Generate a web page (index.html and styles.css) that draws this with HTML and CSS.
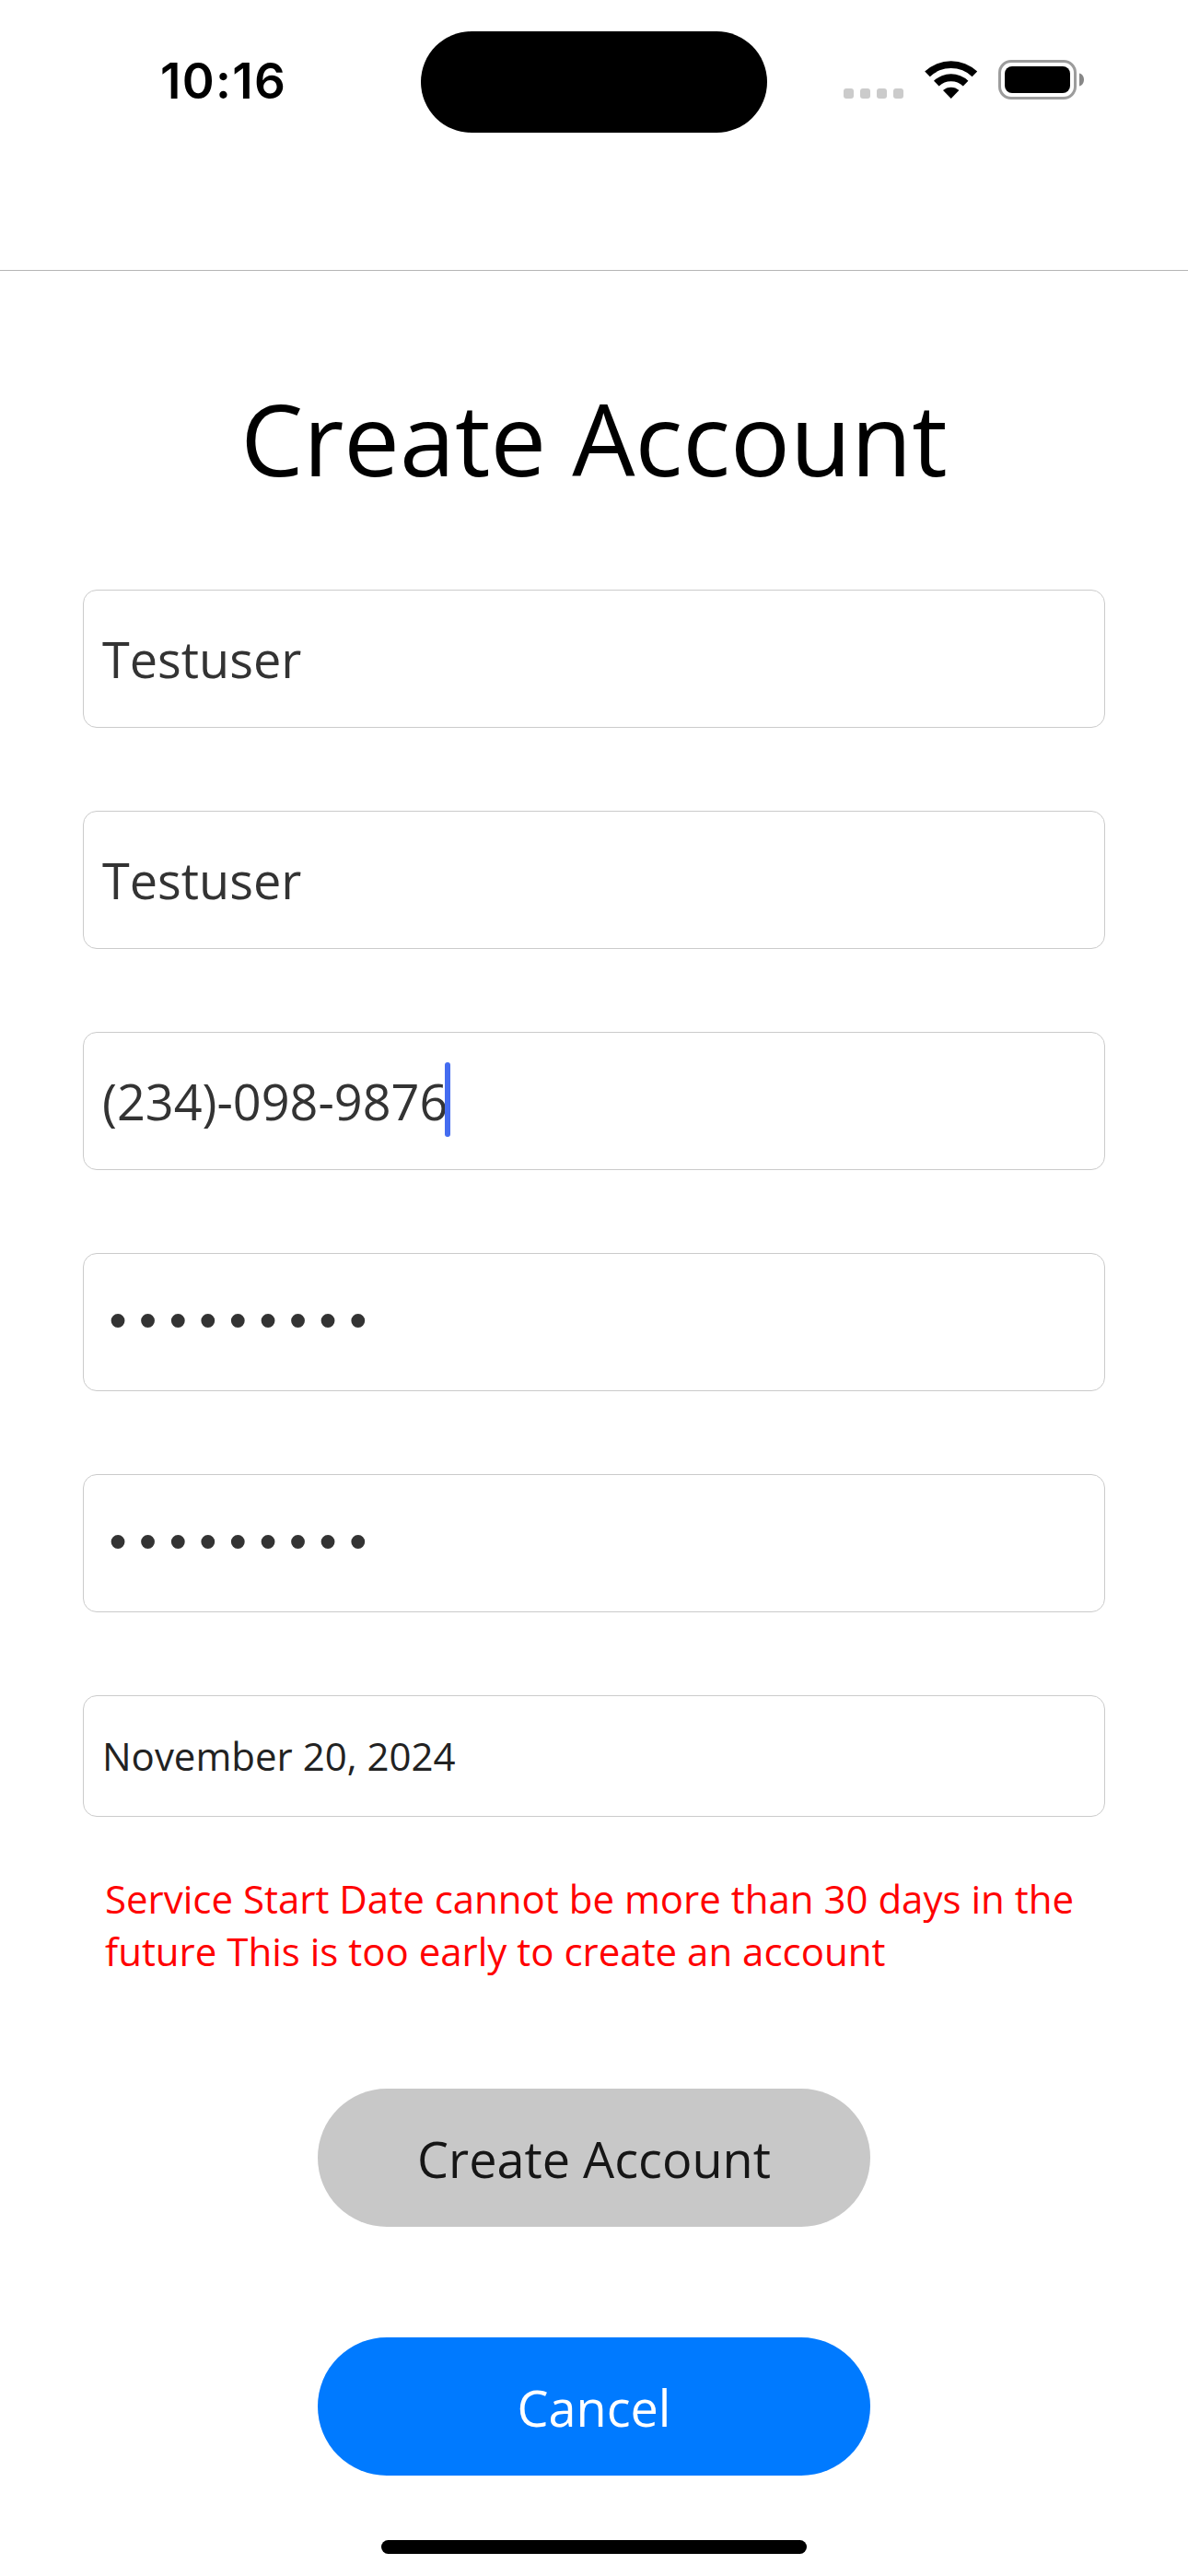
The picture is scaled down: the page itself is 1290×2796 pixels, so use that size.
FILE: index.html
```html
<!DOCTYPE html>
<html lang="en">
<head>
<meta charset="utf-8">
<title>Create Account</title>
<link rel="stylesheet" href="styles.css">
</head>
<body>
<header class="status-bar">
  <div class="clock">10:16</div>
  <div class="island"></div>
  <div class="indicators">
    <svg class="signal" width="65" height="11" viewBox="0 0 65 11" fill="#cbcbcb">
      <rect width="11" height="11" rx="3"/><rect x="18" width="11" height="11" rx="3"/><rect x="36" width="11" height="11" rx="3"/><rect x="54" width="11" height="11" rx="3"/>
    </svg>
    <svg class="wifi" width="58" height="42" viewBox="0 0 58 42">
      <path d="M0.2 12.6 A41.5 41.5 0 0 1 57.2 12.6 L51.6 18.2 A33 33 0 0 0 5.8 18.2 Z"/>
      <path d="M10 22.7 A27.5 27.5 0 0 1 47.4 22.7 L41.8 28.4 A19 19 0 0 0 15.6 28.4 Z"/>
      <path d="M20 33 A13 13 0 0 1 37.4 33 L28.7 41.9 Z"/>
    </svg>
    <svg class="battery" width="94" height="43" viewBox="0 0 94 43">
      <rect x="1.5" y="1.5" width="82" height="40" rx="12.5" fill="none" stroke="#9c9c9c" stroke-width="3"/>
      <rect x="7" y="7" width="71" height="29" rx="8"/>
      <path d="M88 14.5 C91.5 15.5 93 18.5 93 21.5 C93 24.5 91.5 27.5 88 28.5 Z" fill="#878787"/>
    </svg>
  </div>
</header>
<main class="content">
  <h1 class="title">Create Account</h1>
  <form class="form">
    <div class="field">Testuser</div>
    <div class="field">Testuser</div>
    <div class="field"><span class="phone">(234)-098-9876<i class="caret"></i></span></div>
    <div class="field"><span class="password">•••••••••</span></div>
    <div class="field"><span class="password">•••••••••</span></div>
    <div class="field field-date">November 20, 2024</div>
    <p class="error">Service Start Date cannot be more than 30 days in the future This is too early to create an account</p>
    <button class="button button-disabled" type="button">Create Account</button>
    <button class="button button-cancel" type="button">Cancel</button>
  </form>
</main>
<footer class="home-area"><div class="home-indicator"></div></footer>
</body>
</html>
```
FILE: styles.css
```css
* { box-sizing: border-box; }

body {
  margin: 0;
  width: 1290px;
  height: 2796px;
  display: flex;
  flex-direction: column;
  background: #fff;
  color: #000;
  font-family: "Open Sans", sans-serif;
  overflow: hidden;
}

.status-bar {
  height: 294px;
  padding-top: 33px;
  display: grid;
  grid-template-columns: 457px 376px 457px;
  align-items: start;
  border-bottom: 1px solid #b5b5b5;
  flex: none;
}

.clock {
  padding-left: 174px;
  font: 600 53px/111px "Inter", sans-serif;
  letter-spacing: 1.3px;
}

.island {
  height: 110px;
  margin-top: 1px;
  border-radius: 55px;
  background: #000;
}

.indicators {
  display: flex;
  align-items: flex-start;
  padding: 32px 0 0 83px;
}

.signal { margin-top: 31px; }
.wifi { margin-left: 23px; }
.battery { margin-left: 22px; }

.content { padding: 108px 90px 0; }

.title {
  margin: 0;
  font-size: 108px;
  font-weight: 400;
  line-height: 147px;
  text-align: center;
}

.form {
  margin-top: 91px;
  display: flex;
  flex-direction: column;
}

.field {
  height: 150px;
  margin-bottom: 90px;
  padding-left: 20px;
  border: 1px solid #cbcbcb;
  border-radius: 15px;
  font-size: 54px;
  line-height: 148px;
  color: #333;
  white-space: nowrap;
}

.phone { position: relative; }

.caret {
  position: absolute;
  right: -3px;
  top: -5px;
  width: 6px;
  height: 81px;
  border-radius: 3px;
  background: #446cf0;
}

.password {
  padding-left: 2px;
  font: 51px/0 "DejaVu Sans", sans-serif;
  letter-spacing: 2.5px;
  vertical-align: 3px;
}

.field-date {
  height: 132px;
  margin-bottom: 60px;
  font-size: 42px;
  line-height: 130px;
  color: #222;
}

.error {
  margin: 0;
  padding: 0 22px 0 24px;
  font-size: 42px;
  line-height: 57px;
  color: #f00;
}

.button {
  align-self: center;
  width: 600px;
  height: 150px;
  margin: 121px 0 0;
  padding: 2px 0 0;
  border: 0;
  border-radius: 75px;
  font: 54px/148px "Open Sans", sans-serif;
}

.button-disabled { background: #c8c8c8; color: #161616; }
.button-cancel { margin-top: 120px; background: #007aff; color: #fff; }

.home-area {
  margin-top: auto;
  padding-bottom: 24px;
  display: flex;
  justify-content: center;
}

.home-indicator {
  width: 462px;
  height: 15px;
  border-radius: 7.5px;
  background: #000;
}
```
